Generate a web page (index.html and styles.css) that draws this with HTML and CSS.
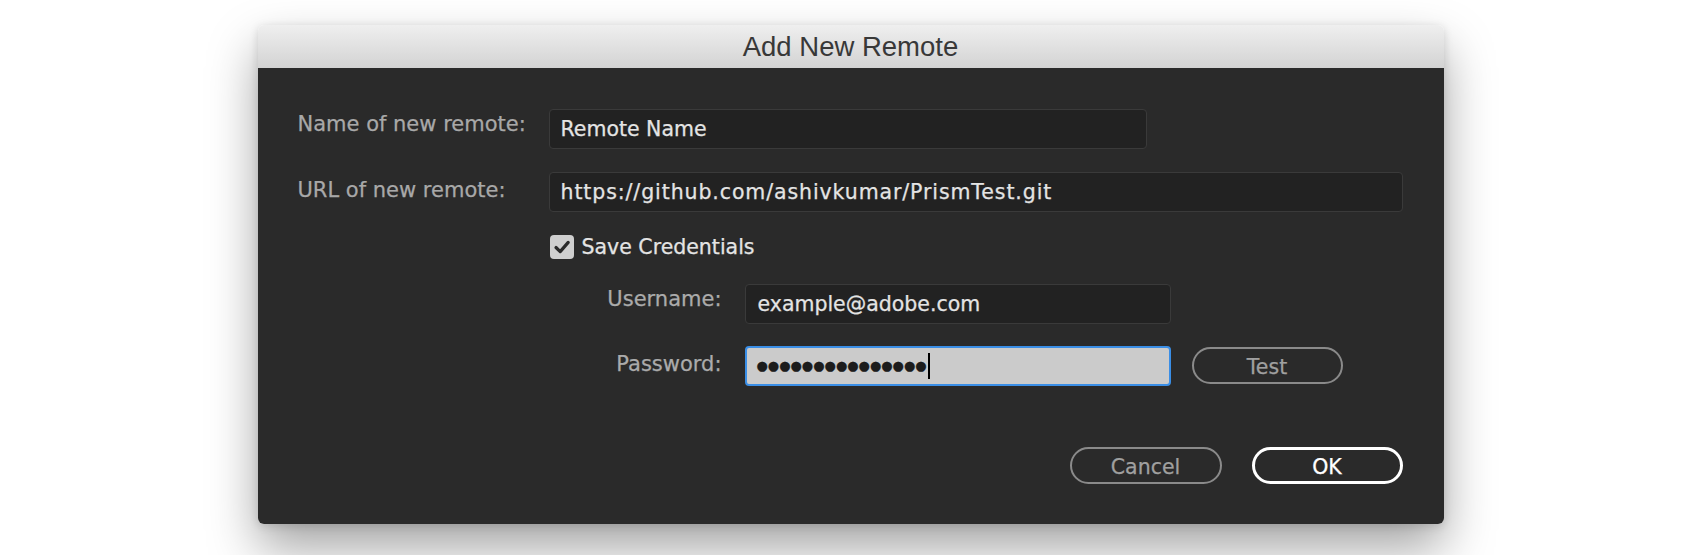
FILE: index.html
```html
<!DOCTYPE html>
<html lang="en">
<head>
<meta charset="utf-8">
<title>Add New Remote</title>
<link rel="stylesheet" href="styles.css">
</head>
<body>
<div class="stage">
  <div class="dialog">
    <div class="titlebar">Add New Remote</div>
    <div class="content">
      <div class="form">
        <div class="label label-first">Name of new remote:</div>
        <div class="field field-name">Remote Name</div>
        <div class="label label-second">URL of new remote:</div>
        <div class="field field-url">https://github.com/ashivkumar/PrismTest.git</div>
        <div class="spacer"></div>
        <div class="check-row">
          <span class="checkbox">
            <svg width="24" height="24" viewBox="0 0 24 24"><path d="M6 12.5 L10.2 16.6 L18.2 7.4" fill="none" stroke="#2a2a2a" stroke-width="3.2" stroke-linecap="round" stroke-linejoin="round"/></svg>
          </span>
          <span class="check-label">Save Credentials</span>
        </div>
      </div>
      <div class="creds">
        <div class="label cred-label label-first">Username:</div>
        <div class="field field-cred">example@adobe.com</div>
        <div></div>
        <div class="label cred-label label-second">Password:</div>
        <div class="field field-cred field-pass"><span class="dots">●●●●●●●●●●●●●●●</span><span class="caret"></span></div>
        <div class="test-cell"><button class="btn btn-plain btn-test">Test</button></div>
      </div>
      <div class="actions">
        <button class="btn btn-plain">Cancel</button>
        <button class="btn btn-default">OK</button>
      </div>
    </div>
  </div>
</div>
</body>
</html>
```
FILE: styles.css
```css
html, body {
  margin: 0;
  padding: 0;
  background: #ffffff;
}

.stage {
  padding-top: 25px;
  min-height: 555px;
  box-sizing: border-box;
  display: flex;
  justify-content: center;
  align-items: flex-start;
}

.dialog {
  width: 1186px;
  border-radius: 6px;
  overflow: hidden;
  box-shadow: 0 24px 50px rgba(0, 0, 0, 0.36), 0 2px 10px rgba(0, 0, 0, 0.14);
}

.titlebar {
  height: 43px;
  box-sizing: border-box;
  padding-top: 1px;
  line-height: 42px;
  text-align: center;
  font-family: "Liberation Sans", Arial, sans-serif;
  font-size: 27.5px;
  color: #383838;
  background: linear-gradient(#efefef, #d3d3d3);
}

.content {
  background: #2a2a2a;
  padding: 41px 41px 40px 40px;
  font-family: "DejaVu Sans", "Noto Sans", sans-serif;
  font-size: 20.5px;
  -webkit-text-stroke: 0.25px;
}

.form {
  display: grid;
  grid-template-columns: 251px 1fr;
  row-gap: 23px;
  align-items: start;
}

.label {
  color: #a8a8a8;
  line-height: 24px;
  white-space: nowrap;
  font-size: 21px;
}

.label-first { padding-top: 3px; }
.label-second { padding-top: 6px; }

.field {
  height: 40px;
  box-sizing: border-box;
  border: 1px solid #3a3a3a;
  border-radius: 4px;
  background: #222222;
  color: #e4e4e4;
  line-height: 38px;
  padding-left: 11px;
  white-space: nowrap;
}

.field-name { width: 598px; }
.field-url {
  width: 854px;
  letter-spacing: 0.9px;
}

.check-row {
  display: flex;
  align-items: center;
  gap: 8px;
  padding-left: 1px;
  height: 24px;
}

.checkbox {
  width: 24px;
  height: 24px;
  border-radius: 4px;
  background: #cfcfcf;
  display: block;
}

.checkbox svg { display: block; }

.check-label {
  color: #e4e4e4;
  line-height: 24px;
}

.creds {
  margin-top: 25px;
  display: grid;
  grid-template-columns: 424px 426px auto;
  column-gap: 23px;
  row-gap: 22px;
  align-items: start;
}

.cred-label {
  text-align: right;
  color: #ababab;
}

.field-cred {
  padding-left: 12px;
}

.field-pass {
  border: 2px solid #3a8ee6;
  background: #cbcbcb;
  color: #1c1c1c;
  line-height: 36px;
  padding-left: 10px;
  display: flex;
  align-items: center;
}

.dots {
  font-size: 13px;
  letter-spacing: 0;
  line-height: 20px;
}

.caret {
  display: block;
  width: 2px;
  height: 26px;
  background: #000000;
  margin-left: 1px;
}

.test-cell {
  margin-left: -2px;
  padding-top: 1px;
}

.btn {
  height: 37px;
  width: 152px;
  box-sizing: border-box;
  border-radius: 19px;
  background: transparent;
  font-family: "DejaVu Sans", "Noto Sans", sans-serif;
  font-size: 20.5px;
  line-height: 24px;
  margin: 0;
  cursor: default;
  -webkit-text-stroke: 0.25px;
}

.btn-plain {
  border: 2px solid #8a8a8a;
  color: #a0a0a0;
  padding: 6px 0 3px;
}

.btn-test { width: 151px; }

.btn-default {
  width: 151px;
  border: 3px solid #ffffff;
  color: #ffffff;
  padding: 5px 0 2px;
}

.actions {
  margin-top: 61px;
  display: flex;
  justify-content: flex-end;
  gap: 30px;
}
```
